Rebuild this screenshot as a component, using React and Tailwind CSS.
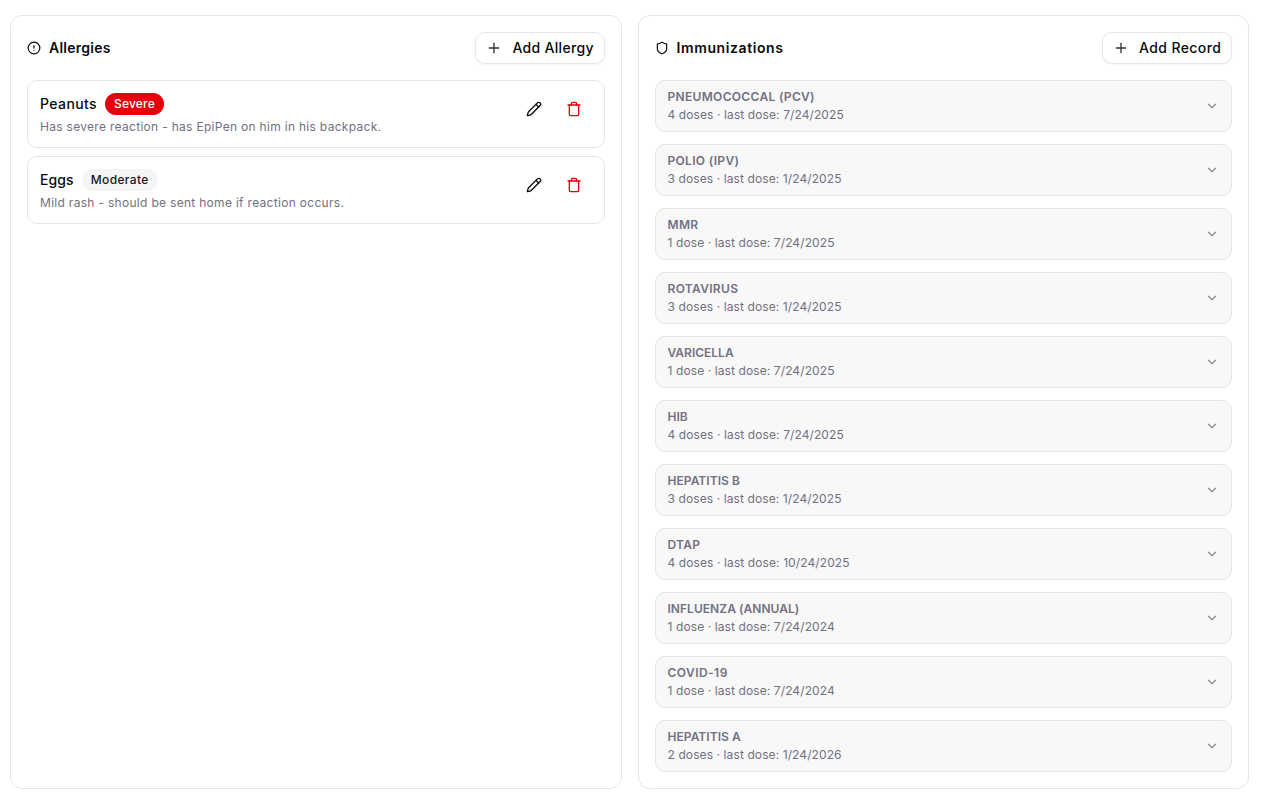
import React from 'react'
import { ChevronDown, CircleAlert, Pencil, Plus, Shield, Trash } from 'lucide-react'

const allergies = [
  { name: 'Peanuts', level: 'Severe', note: 'Has severe reaction - has EpiPen on him in his backpack.', track: 'tracking-[0.4px]' },
  { name: 'Eggs', level: 'Moderate', note: 'Mild rash - should be sent home if reaction occurs.', track: 'tracking-[0.1px]' },
]

const records = [
  { name: 'Pneumococcal (PCV)', info: '4 doses · last dose: 7/24/2025', track: 'tracking-[0.32px]' },
  { name: 'Polio (IPV)', info: '3 doses · last dose: 1/24/2025', track: 'tracking-[0.32px]' },
  { name: 'MMR', info: '1 dose · last dose: 7/24/2025', track: 'tracking-[0.32px]' },
  { name: 'Rotavirus', info: '3 doses · last dose: 1/24/2025', track: 'tracking-[0.32px]' },
  { name: 'Varicella', info: '1 dose · last dose: 7/24/2025', track: 'tracking-[0px]' },
  { name: 'Hib', info: '4 doses · last dose: 7/24/2025', track: 'tracking-[0px]' },
  { name: 'Hepatitis B', info: '3 doses · last dose: 1/24/2025', track: 'tracking-[0.05px]' },
  { name: 'DTaP', info: '4 doses · last dose: 10/24/2025', track: 'tracking-[0.32px]' },
  { name: 'Influenza (Annual)', info: '1 dose · last dose: 7/24/2024', track: 'tracking-[0.04px]' },
  { name: 'COVID-19', info: '1 dose · last dose: 7/24/2024', track: 'tracking-[0.45px]' },
  { name: 'Hepatitis A', info: '2 doses · last dose: 1/24/2026', track: 'tracking-[0.05px]' },
]

function AddButton({ label, textClass }) {
  return (
    <button className="flex h-8 w-[130px] items-center rounded-[10px] border border-[#e5e5e5] bg-white pl-[10px] text-[14px] font-medium text-[#0a0a0a] shadow-xs">
      <Plus size={16} strokeWidth={2} className="text-[#333]" />
      <span className={textClass}>{label}</span>
    </button>
  )
}

export default function App() {
  return (
    <div className="min-h-[802px] bg-white pl-[10px] pt-[15px] font-['Inter',sans-serif] text-[#0a0a0a]">
      <div className="grid w-[1239px] grid-cols-2 items-stretch gap-4">
        <section className="rounded-[12px] border border-[#e5e5e5] p-4">
          <div className="mb-4 flex h-8 items-center justify-between">
            <h2 className="flex items-center gap-2 text-[14px] font-semibold">
              <CircleAlert size={14} strokeWidth={2} />
              <span className="pb-[2px] tracking-[0.25px]">Allergies</span>
            </h2>
            <AddButton label="Add Allergy" textClass="ml-[11px] pb-[2px] tracking-[0.3px]" />
          </div>
          <div className="flex flex-col gap-2">
            {allergies.map(a => (
              <div key={a.name} className="flex h-[68px] items-start justify-between rounded-[10px] border border-[#e5e5e5] pl-3 pr-[22px] pt-[11px]">
                <div>
                  <div className="flex h-[24px] items-center gap-2">
                    <span className={`pb-[2px] text-[14px] font-medium ${a.track}`}>{a.name}</span>
                    <span className={a.level === 'Severe'
                      ? 'rounded-full bg-[#e7000b] px-[9px] py-[3px] text-[12px] leading-4 font-medium tracking-[0.2px] text-white'
                      : 'rounded-full bg-[#f5f5f5] px-[9px] py-[3px] text-[12px] leading-4 font-medium tracking-[0.35px] text-[#171717]'}>
                      {a.level}
                    </span>
                  </div>
                  <p className="mt-[1px] text-[12px] leading-[20px] tracking-[0.3px] text-[#717182]">{a.note}</p>
                </div>
                <div className="flex items-center gap-6 pt-[9px]">
                  <Pencil size={16} strokeWidth={2} />
                  <Trash size={16} strokeWidth={2} className="text-[#e7000b]" />
                </div>
              </div>
            ))}
          </div>
        </section>

        <section className="rounded-[12px] border border-[#e5e5e5] p-4">
          <div className="mb-4 flex h-8 items-center justify-between">
            <h2 className="flex items-center gap-2 text-[14px] font-semibold">
              <Shield size={14} strokeWidth={2} />
              <span className="pb-[2px] tracking-[0.6px]">Immunizations</span>
            </h2>
            <AddButton label="Add Record" textClass="ml-[10px] pb-[2px] tracking-[0.4px]" />
          </div>
          <div className="flex flex-col gap-3">
            {records.map(r => (
              <div key={r.name} className="flex h-[52px] items-center justify-between rounded-[10px] border border-[#e5e5e5] bg-[#f8f8f8] pl-3 pr-3">
                <div>
                  <div className={`text-[12px] leading-[18px] font-semibold text-[#717182] uppercase ${r.track}`}>{r.name}</div>
                  <div className="text-[12px] leading-[18px] tracking-[0.1px] text-[#717182]">{r.info}</div>
                </div>
                <ChevronDown size={14} strokeWidth={2} className="text-[#8a8a8a]" />
              </div>
            ))}
          </div>
        </section>
      </div>
    </div>
  )
}
